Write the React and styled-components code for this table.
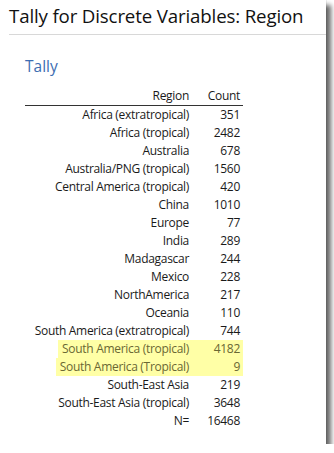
import React from "react";
import styled, { createGlobalStyle } from "styled-components";

const Global = createGlobalStyle`
  html, body { margin: 0; padding: 0; background: #ffffff; }
  body { font-family: "Open Sans", "Noto Sans", sans-serif; }
`;

const Panel = styled.div`
  width: 326px;
  height: 444px;
  background: #fff;
  box-sizing: border-box;
  box-shadow: 0 0 1px rgba(0,0,0,0.35), 5px 5px 5px rgba(0,0,0,0.6);
  display: flex;
  flex-direction: column;
`;

const Title = styled.h1`
  margin: 0 0 0 9px;
  padding: 4px 0 6px;
  font-family: "Open Sans", sans-serif;
  font-weight: 400;
  font-size: 18.7px;
  line-height: 24px;
  color: #111;
  border-bottom: 1px solid #d8d8d8;
  letter-spacing: -0.15px;
`;

const Section = styled.div`
  padding: 21px 0 0 25px;
`;

const SubTitle = styled.h2`
  margin: 0 0 10px;
  font-family: "Open Sans", sans-serif;
  font-weight: 400;
  font-size: 15.5px;
  line-height: 20px;
  color: #3d6db2;
`;

const Table = styled.table`
  border-collapse: collapse;
  font-family: "Open Sans", sans-serif;
  font-size: 12px;
  letter-spacing: -0.3px;
  color: #1a1a1a;
  width: 218px;
`;

const Th = styled.th`
  font-weight: 400;
  text-align: right;
  padding: 0 ${(p) => (p.$last ? "3px" : "8px")} 1px 0;
  width: ${(p) => (p.$last ? "43px" : "auto")};
  height: 18px;
  border-bottom: 1px solid #333;
  white-space: nowrap;
`;

const Row = styled.tr`
  color: ${(p) => (p.$hl ? "#6a6834" : "inherit")};
`;

const Td = styled.td`
  text-align: right;
  padding: 0 ${(p) => (p.$last ? "3px" : "8px")} 0 0;
  height: 18px;
  line-height: 18px;
  white-space: nowrap;
  background: ${(p) => (p.$hl ? "#ffffa6" : "transparent")};
`;

const HlText = styled.span`
  display: inline-block;
  background: #ffffa6;
  padding: 0 8px 0 4px;
  margin-right: -8px;
`;

const rows = [
  ["Africa (extratropical)", "351"],
  ["Africa (tropical)", "2482"],
  ["Australia", "678"],
  ["Australia/PNG (tropical)", "1560"],
  ["Central America (tropical)", "420"],
  ["China", "1010"],
  ["Europe", "77"],
  ["India", "289"],
  ["Madagascar", "244"],
  ["Mexico", "228"],
  ["NorthAmerica", "217"],
  ["Oceania", "110"],
  ["South America (extratropical)", "744"],
  ["South America (tropical)", "4182", true],
  ["South America (Tropical)", "9", true],
  ["South-East Asia", "219"],
  ["South-East Asia (tropical)", "3648"],
];

export default function App() {
  return (
    <>
      <Global />
      <Panel>
        <Title>Tally for Discrete Variables: Region</Title>
        <Section>
          <SubTitle>Tally</SubTitle>
          <Table>
            <thead>
              <tr>
                <Th>Region</Th>
                <Th $last>Count</Th>
              </tr>
            </thead>
            <tbody>
              {rows.map(([r, c, hl]) => (
                <Row key={r} $hl={hl}>
                  <Td>{hl ? <HlText>{r}</HlText> : r}</Td>
                  <Td $last $hl={hl}>{c}</Td>
                </Row>
              ))}
              <Row>
                <Td>N=</Td>
                <Td $last>16468</Td>
              </Row>
            </tbody>
          </Table>
        </Section>
      </Panel>
    </>
  );
}
